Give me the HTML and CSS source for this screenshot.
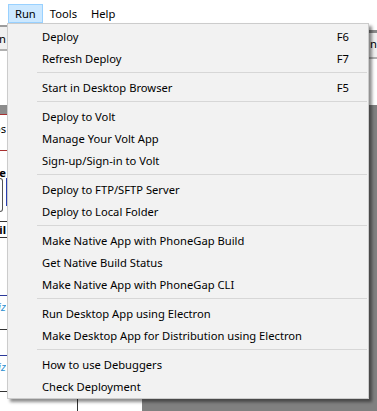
FILE: index.html
```html
<!DOCTYPE html>
<html>
<head>
<meta charset="utf-8">
<link rel="stylesheet" href="styles.css">
</head>
<body>
<div class="window">
  <div class="menubar">
    <div class="mi active">Run</div>
    <div class="mi">Tools</div>
    <div class="mi">Help</div>
  </div>
  <div class="toolbar">
    <div class="tb-left"><span class="clip">Design</span></div>
    <div class="tb-right"><span class="tb-text">n-</span></div>
  </div>
  <div class="main">
    <div class="side">
      <div class="side-head"></div>
      <div class="prop-row"><span class="clip">Props</span></div>
      <div class="section">
        <div class="sec-title"><span class="clip bold">Name</span></div>
        <div class="field-row"><div class="field"></div><div class="caret"></div></div>
        <div class="sub-row"><span class="clip bold">Detail</span></div>
      </div>
      <div class="list">
        <div class="list-row"><span class="clip ital">Quiz</span></div>
        <div class="list-row"><span class="clip ital">Quiz</span></div>
      </div>
      <div class="table-foot"></div>
    </div>
    <div class="canvas"></div>
  </div>

  <div class="popup">
    <div class="item"><span>Deploy</span><span class="key">F6</span></div>
    <div class="item"><span>Refresh Deploy</span><span class="key">F7</span></div>
    <div class="sep"></div>
    <div class="item"><span>Start in Desktop Browser</span><span class="key">F5</span></div>
    <div class="sep"></div>
    <div class="item"><span>Deploy to Volt</span></div>
    <div class="item"><span>Manage Your Volt App</span></div>
    <div class="item"><span>Sign-up/Sign-in to Volt</span></div>
    <div class="sep"></div>
    <div class="item"><span>Deploy to FTP/SFTP Server</span></div>
    <div class="item"><span>Deploy to Local Folder</span></div>
    <div class="sep"></div>
    <div class="item"><span>Make Native App with PhoneGap Build</span></div>
    <div class="item"><span>Get Native Build Status</span></div>
    <div class="item"><span>Make Native App with PhoneGap CLI</span></div>
    <div class="sep"></div>
    <div class="item"><span>Run Desktop App using Electron</span></div>
    <div class="item"><span>Make Desktop App for Distribution using Electron</span></div>
    <div class="sep"></div>
    <div class="item"><span>How to use Debuggers</span></div>
    <div class="item"><span>Check Deployment</span></div>
  </div>
</div>
</body>
</html>
```

FILE: styles.css
```css
html, body {
  margin: 0;
  padding: 0;
}
body {
  width: 377px;
  height: 411px;
  overflow: hidden;
  background: #fff;
  font-family: "Noto Sans", "Open Sans", sans-serif;
  font-size: 11.2px;
  color: #000;
}
.window {
  position: relative;
  height: 411px;
  display: flex;
  flex-direction: column;
}

/* menu bar */
.menubar {
  height: 25px;
  flex: none;
  box-sizing: border-box;
  padding: 4px 0 0 8px;
  display: flex;
  align-items: flex-start;
  background: #fff;
}
.mi {
  height: 19px;
  box-sizing: border-box;
  padding: 0 6px 1px;
  display: flex;
  align-items: center;
  border: 1px solid transparent;
}
.mi.active {
  background: #cce8ff;
  border-color: #99d1ff;
}

/* toolbar behind the popup */
.toolbar {
  height: 80px;
  flex: none;
  display: flex;
  justify-content: space-between;
  align-items: flex-start;
  background: #fff;
}
.tb-left {
  width: 110px;
  height: 26px;
  box-sizing: border-box;
  border-top: 2px solid #9c9c9c;
  border-bottom: 2px solid #b0b0b0;
  background: #f0f0f0;
  display: flex;
  align-items: center;
}
.tb-right {
  width: 70px;
  height: 29px;
  margin-top: 5px;
  box-sizing: border-box;
  border-top: 3px solid #8a8a8a;
  border-bottom: 2px solid #b0b0b0;
  background: #f0f0f0;
  padding: 3px 0 0 63px;
  white-space: nowrap;
  overflow: hidden;
}
.clip {
  display: block;
  width: 6px;
  overflow: hidden;
  direction: rtl;
  white-space: nowrap;
  line-height: 15px;
}
.bold { font-weight: bold; }
.ital { font-style: italic; color: #2b8fd0; }

/* main area */
.main {
  flex: 1;
  display: flex;
}
.side {
  width: 142px;
  flex: none;
  background: #fff;
  display: flex;
  flex-direction: column;
}
.side-head {
  height: 9px;
  background: #8c8c8c;
}
.prop-row {
  height: 36px;
  box-sizing: border-box;
  border-top: 1px solid #a83030;
  padding-top: 6px;
}
.section {
  border-top: 1px solid #a83030;
}
.sec-title {
  height: 27px;
  box-sizing: border-box;
  padding-top: 14px;
}
.field-row {
  height: 34px;
  display: flex;
  align-items: flex-start;
}
.field {
  width: 3px;
  height: 34px;
  box-sizing: border-box;
  border: 1px solid #555;
  border-left: none;
  border-radius: 0 4px 4px 0;
}
.caret {
  width: 2px;
  height: 28px;
  margin-left: 3px;
  background: #2a3fb0;
}
.sub-row {
  margin-top: 9px;
  height: 17px;
  box-sizing: border-box;
  border-top: 1px solid #333;
  border-bottom: 1px solid #333;
}
.list {
  margin-top: 57px;
}
.list-row {
  height: 35px;
  box-sizing: border-box;
  border-top: 1px solid #2c3a9a;
  border-bottom: 1px solid #333;
  padding-top: 3px;
  margin-bottom: 25px;
}
.list-row:last-child {
  margin-bottom: 0;
  height: 37px;
}
.table-foot {
  flex: 1;
  margin-left: 77px;
  border-left: 1px solid #333;
}
.canvas {
  flex: 1;
  background: #808080;
}

/* popup menu */
.popup {
  position: absolute;
  left: 7px;
  top: 23px;
  width: 362px;
  box-sizing: border-box;
  border: 1px solid #cccccc;
  background: #f2f2f2;
  padding: 1px 0;
  box-shadow: 3px 3px 3px rgba(0, 0, 0, 0.45);
}
.item {
  height: 22px;
  box-sizing: border-box;
  padding: 0 19px 0 34px;
  display: flex;
  align-items: center;
  justify-content: space-between;
  white-space: nowrap;
}
.sep {
  height: 7px;
  box-sizing: border-box;
  padding-top: 3px;
}
.sep::after {
  content: "";
  display: block;
  margin: 0 1px 0 29px;
  border-top: 1px solid #d7d7d7;
}
```
